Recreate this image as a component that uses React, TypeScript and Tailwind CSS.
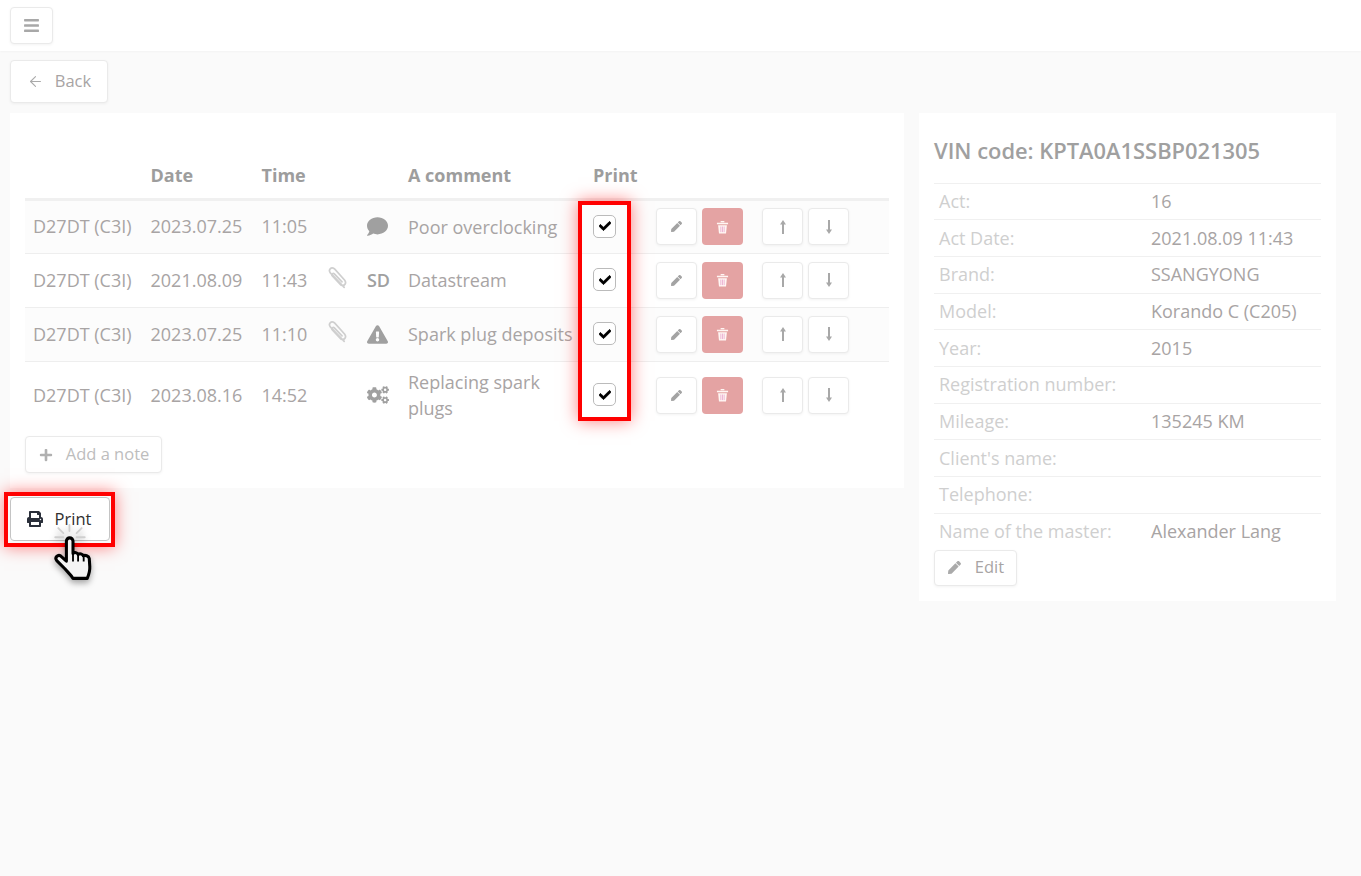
import { ArrowLeft } from "lucide-react";
import { FaBars, FaCheck, FaCogs, FaComment, FaExclamationTriangle, FaPen, FaPlus, FaPrint } from "react-icons/fa";

const notes = [
    { engine: "D27DT (C3I)", date: "2023.07.25", time: "11:05", clip: false, kind: "comment", text: "Poor overclocking" },
    { engine: "D27DT (C3I)", date: "2021.08.09", time: "11:43", clip: true, kind: "sd", text: "Datastream" },
    { engine: "D27DT (C3I)", date: "2023.07.25", time: "11:10", clip: true, kind: "warning", text: "Spark plug deposits" },
    { engine: "D27DT (C3I)", date: "2023.08.16", time: "14:52", clip: false, kind: "gears", text: "Replacing spark plugs" },
];

const details = [
    { label: "Act:", value: "16" },
    { label: "Act Date:", value: "2021.08.09 11:43" },
    { label: "Brand:", value: "SSANGYONG" },
    { label: "Model:", value: "Korando C (C205)" },
    { label: "Year:", value: "2015" },
    { label: "Registration number:", value: "" },
    { label: "Mileage:", value: "135245 KM" },
    { label: "Client's name:", value: "" },
    { label: "Telephone:", value: "" },
    { label: "Name of the master:", value: "Alexander Lang" },
];

const btn = "flex items-center justify-center rounded-[4px] border border-[#eaeaea] bg-white shadow-[0_1px_3px_rgba(0,0,0,0.05)]";

const KindIcon = ({ kind }: { kind: string }) => {
    if (kind === "comment") return <FaComment size={21} className="text-[#a0a0a0]" />;
    if (kind === "sd") return <span className="translate-x-px font-semibold text-[#a0a0a0]">SD</span>;
    if (kind === "warning") return <FaExclamationTriangle size={21} className="text-[#a0a0a0]" />;
    return <FaCogs size={22} className="text-[#a0a0a0]" />;
};

const Clip = () => (
    <svg viewBox="0 0 20 22" className="-ml-[3px] -mt-[5px] h-[24px] w-[22px]" fill="none" stroke="#cfcfcf" strokeWidth="1.600" strokeLinecap="round">
        <path d="M17.500 19.500L5 6.500C2.500 3.500 5.500.5 8.500 2.500L18 13c2 2.800-.5 6-3.500 4.500L6.500 9c-1-1.500.8-2.800 2-1.800l7 7.300" />
    </svg>
);

const Trash = () => (
    <svg viewBox="0 0 14 15" className="h-[14px] w-[13px]">
        <path d="M1 3h12v1.500H1zM5 1h4v1.500H5z" fill="#fff6f3" />
        <path d="M2.300 5.500h9.400L10.800 14.500H3.200z" fill="#fff6f3" />
        <path d="M5.200 7v6M7 7v6M8.800 7v6" stroke="#e9a9cf" strokeWidth="0.900" />
    </svg>
);

const ArrowV = ({ down }: { down?: boolean }) => (
    <svg viewBox="0 0 10 16" className={`h-[16px] w-[10px] ${down ? "rotate-180" : ""}`}>
        <path d="M5 1L8 5.500H6V15H4V5.500H2z" fill="#a8a8a8" />
    </svg>
);

const Hand = () => (
    <svg viewBox="0 0 44 60" className="absolute left-[50px] top-[524px] h-[61px] w-[45px] drop-shadow-[0_3px_3px_rgba(0,0,0,0.35)]">
        <g stroke="#cfcfcf" strokeWidth="1.800" strokeLinecap="round">
            <path d="M5 13h8M26 13h8M8 4l5 5M31 4l-5 5M19 1v6" />
        </g>
        <path
            d="M16 17c0-4.500 6.500-4.500 6.500 0v12c1.500-1.500 4.500-1 5 1 1.500-1.200 4.500-.7 5 1.200 1.800-.8 5.500-.2 6 2.800l.5 8c.3 4.500-.8 7.500-2.500 11.500H22.500c-2-3.500-5.500-6.500-8-9.500L6.500 36c-2.500-3 1.200-6.500 4-4.500l5.500 5z"
            fill="#f4f4f4"
            stroke="#000"
            strokeWidth="3"
            strokeLinejoin="round"
        />
        <path d="M22.500 28v9M27.500 30v7M33 31v6" stroke="#000" strokeWidth="1.800" />
    </svg>
);

export default function App() {
    return (
        <div className="relative min-h-[876px] bg-[#fafafa] font-['Open_Sans',sans-serif] text-[18px] text-[#a8a4a4]">
            <header className="flex h-[51px] items-start bg-white pl-[10px] pt-[7px] shadow-[0_1px_2px_rgba(0,0,0,0.03)]">
                <div className={`${btn} h-[37px] w-[43px]`}>
                    <FaBars size={17} className="text-[#a8a8a8]" />
                </div>
            </header>

            <div className="px-[10px] pt-[9px]">
                <div className={`${btn} h-[43px] w-[98px] gap-[11px] text-[16.500px]`}>
                    <ArrowLeft size={17} strokeWidth={1.5} className="text-[#aaa]" />
                    <span>Back</span>
                </div>

                <div className="mt-[10px] flex items-start gap-[15px]">
                    <div className="w-[894px]">
                        <section className="h-[375px] bg-white px-[15px] pt-[46px]">
                            <table className="w-[864px] table-fixed border-collapse">
                                <thead>
                                    <tr className="h-[40px] border-b-[3px] border-[#f0f0f0] text-left font-bold text-[#9d9d9d]">
                                        <th className="w-[117.500px]"></th>
                                        <th className="w-[111px] pb-[6px] pl-[8px]">Date</th>
                                        <th className="w-[66.500px] pb-[6px] pl-[8px]">Time</th>
                                        <th className="w-[38px]"></th>
                                        <th className="w-[42px]"></th>
                                        <th className="w-[185px] pb-[6px] pl-[8px]">A comment</th>
                                        <th className="w-[63px] pb-[6px] pl-[8px]">Print</th>
                                        <th></th>
                                    </tr>
                                </thead>
                                <tbody>
                                    {notes.map((note, i) => (
                                        <tr
                                            key={note.date + note.time}
                                            className={`${i === 3 ? "h-[68px]" : "h-[54px] border-b border-[#eeeeee]"} ${i % 2 === 0 ? "bg-[#fcfcfc]" : "bg-white"}`}
                                        >
                                            <td className="pl-[8px] whitespace-nowrap">{note.engine}</td>
                                            <td className="pl-[8px]">{note.date}</td>
                                            <td className="pl-[8px]">{note.time}</td>
                                            <td className="pl-[8px]">{note.clip && <Clip />}</td>
                                            <td>
                                                <div className="flex justify-center pr-[3px]">
                                                    <KindIcon kind={note.kind} />
                                                </div>
                                            </td>
                                            <td className="pl-[8px] leading-[26px]">{note.text}</td>
                                            <td className="pl-[8px]">
                                                <div className="-mt-[1px] flex h-[23px] w-[23px] items-center justify-center rounded-[5px] border border-[#bbbbbb] bg-white">
                                                    <FaCheck size={12} stroke="currentColor" strokeWidth={30} className="text-black" />
                                                </div>
                                            </td>
                                            <td className="pl-[8px]">
                                                <div className="flex items-center">
                                                    <div className={`${btn} h-[37px] w-[41px]`}>
                                                        <FaPen size={11} className="text-[#a3a3a3]" />
                                                    </div>
                                                    <div className="ml-[5px] flex h-[37px] w-[41px] items-center justify-center rounded-[4px] bg-[#e4a3a3]">
                                                        <Trash />
                                                    </div>
                                                    <div className={`${btn} ml-[19px] h-[37px] w-[41px]`}>
                                                        <ArrowV />
                                                    </div>
                                                    <div className={`${btn} ml-[5px] h-[37px] w-[41px]`}>
                                                        <ArrowV down />
                                                    </div>
                                                </div>
                                            </td>
                                        </tr>
                                    ))}
                                </tbody>
                            </table>
                            <div className={`${btn} mt-[7px] h-[37px] w-[137px] gap-[13px] pl-[1px] text-[16.500px]`}>
                                <FaPlus size={14} className="text-[#b0b0b0]" />
                                <span className="font-medium text-[#bdbdbd]">Add a note</span>
                            </div>
                        </section>

                        <div className="mt-[9px] flex h-[44px] w-[100px] items-center justify-center gap-[12px] rounded-[4px] border border-[#c4c4c4] bg-white pr-[2px] text-[16.500px] text-[#303030]">
                            <FaPrint size={16} className="text-[#2a2f3a]" />
                            <span>Print</span>
                        </div>
                    </div>

                    <aside className="h-[488px] w-[417px] bg-white px-[15px] pt-[22px]">
                        <h2 className="mb-[15.600px] text-[21.900px] leading-[32px] font-semibold text-[#a0a0a0]">VIN code: KPTA0A1SSBP021305</h2>
                        {details.map((row) => (
                            <div key={row.label} className="flex h-[36.670px] items-center border-t border-[#f0f0f0] pl-[5px]">
                                <span className="w-[212px] shrink-0 text-[#cfcfcf]">{row.label}</span>
                                <span>{row.value}</span>
                            </div>
                        ))}
                        <div className={`${btn} mt-[0.400px] h-[36px] w-[83px] gap-[14px] pl-[1px] text-[16.500px]`}>
                            <FaPen size={13} className="text-[#aaa]" />
                            <span>Edit</span>
                        </div>
                    </aside>
                </div>
            </div>

            {/* red annotations drawn over the screenshot */}
            <div className="absolute left-[578px] top-[201px] h-[220px] w-[53px] border-4 border-[#ff0000] shadow-[0_0_16px_rgba(255,0,0,0.5)]"></div>
            <div className="absolute left-[4px] top-[492px] h-[55px] w-[111px] border-4 border-[#ff0000] shadow-[0_0_16px_rgba(255,0,0,0.5)]"></div>
            <Hand />
        </div>
    );
}
